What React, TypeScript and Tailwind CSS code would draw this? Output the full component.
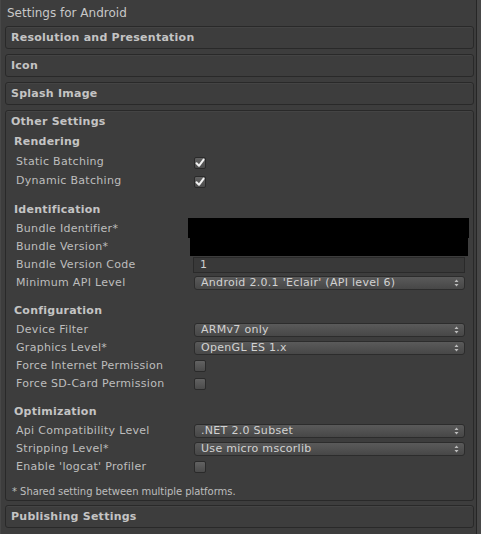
import React from "react";

const FONT = "font-['DejaVu_Sans',sans-serif]";

function Panel({ title, children }: { title: string; children?: React.ReactNode }) {
  return (
    <div className="rounded-[3px] border border-[#292929] bg-[#3d3d3d] shadow-[inset_0_1px_0_rgba(255,255,255,0.04)]">
      <div className="h-[21px] pl-[5px] text-[11px] leading-[21px] font-bold tracking-[0.25px] text-[#c4c4c4]">{title}</div>
      {children}
    </div>
  );
}

function Heading({ children }: { children: React.ReactNode }) {
  return (
    <div className="h-[18px] pl-[8px] text-[11px] leading-[18px] font-bold tracking-[0.25px] text-[#c4c4c4]">{children}</div>
  );
}

function Row({ label, children, className = "h-[18px]" }: { label: string; children?: React.ReactNode; className?: string }) {
  return (
    <div className={`flex items-center pl-[10px] pr-[8px] ${className}`}>
      <div className="w-[177px] shrink-0 text-[11px] tracking-[0.3px] text-[#bdbdbd]">{label}</div>
      <div className="relative flex flex-1 items-center">{children}</div>
    </div>
  );
}

function Checkbox({ checked }: { checked?: boolean }) {
  return (
    <div className="ml-[1px] flex h-[12px] w-[12px] items-center justify-center rounded-[2px] border border-[#2a2a2a] bg-gradient-to-b from-[#626262] to-[#4b4b4b]">
      {checked && (
        <svg width="10" height="10" viewBox="0 0 10 10">
          <path d="M1.5 5.2 L4 7.8 L8.6 1.6" fill="none" stroke="#f2f2f2" strokeWidth="2" strokeLinecap="round" strokeLinejoin="round" />
        </svg>
      )}
    </div>
  );
}

function Dropdown({ value }: { value: string }) {
  return (
    <div className="ml-[1px] flex h-[14px] flex-1 items-center justify-between rounded-[3px] border border-[#2c2c2c] bg-gradient-to-b from-[#5a5a5a] to-[#474747] pl-[6px] pr-[5px]">
      <span className="text-[11px] leading-[12px] tracking-[0.3px] text-[#d2d2d2]">{value}</span>
      <svg width="5" height="8" viewBox="0 0 5 8">
        <path d="M2.5 0.5 L4.5 3 L0.5 3 Z M2.5 7.5 L4.5 5 L0.5 5 Z" fill="#bdbdbd" />
      </svg>
    </div>
  );
}

export default function App() {
  return (
    <div className={`flex h-[534px] w-[481px] bg-[#3d3d3d] ${FONT}`}>
      <div className="flex w-[476px] flex-col border-l border-[#474747] pr-[2px] pl-[4px]">
        <div className="h-[26px] pt-[1px] pl-[2px] text-[12px] leading-[24px] text-[#c8c8c8]">Settings for Android</div>
        <div className="flex flex-col gap-[5px]">
          <Panel title="Resolution and Presentation" />
          <Panel title="Icon" />
          <Panel title="Splash Image" />
          <Panel title="Other Settings">
            <div className="mt-[1px]">
              <Heading>Rendering</Heading>
            </div>
            <div className="mt-[2px]">
              <Row label="Static Batching" className="h-[19px]">
                <Checkbox checked />
              </Row>
              <Row label="Dynamic Batching" className="h-[19px]">
                <Checkbox checked />
              </Row>
            </div>

            <div className="mt-[10px]">
              <Heading>Identification</Heading>
            </div>
            <div className="mt-[1px]">
              <Row label="Bundle Identifier*">
                <div className="absolute -top-[11px] -left-[5px] h-[20px] w-[281px] bg-black" />
              </Row>
              <Row label="Bundle Version*">
                <div className="absolute -top-[9px] -left-[3px] h-[18px] w-[278px] bg-black" />
              </Row>
              <Row label="Bundle Version Code">
                <div className="flex h-[16px] flex-1 items-center border border-[#2a2a2a] bg-[#393939] pl-[6px] text-[11px] text-[#cfcfcf]">1</div>
              </Row>
              <Row label="Minimum API Level">
                <Dropdown value="Android 2.0.1 'Eclair' (API level 6)" />
              </Row>
            </div>

            <div className="mt-[10px]">
              <Heading>Configuration</Heading>
            </div>
            <div className="mt-[1px]">
              <Row label="Device Filter">
                <Dropdown value="ARMv7 only" />
              </Row>
              <Row label="Graphics Level*">
                <Dropdown value="OpenGL ES 1.x" />
              </Row>
              <Row label="Force Internet Permission">
                <Checkbox />
              </Row>
              <Row label="Force SD-Card Permission">
                <Checkbox />
              </Row>
            </div>

            <div className="mt-[10px]">
              <Heading>Optimization</Heading>
            </div>
            <div className="mt-[1px]">
              <Row label="Api Compatibility Level">
                <Dropdown value=".NET 2.0 Subset" />
              </Row>
              <Row label="Stripping Level*">
                <Dropdown value="Use micro mscorlib" />
              </Row>
              <Row label="Enable 'logcat' Profiler">
                <Checkbox />
              </Row>
            </div>

            <div className="mt-[7px] h-[17px] pl-[6px] text-[10px] leading-[17px] tracking-[-0.05px] text-[#bdbdbd]">
              * Shared setting between multiple platforms.
            </div>
          </Panel>
          <div className="-mt-[1px]">
            <Panel title="Publishing Settings" />
          </div>
        </div>
      </div>
      <div className="w-[1px] bg-[#262626]" />
      <div className="flex-1 bg-[#474747]" />
    </div>
  );
}
